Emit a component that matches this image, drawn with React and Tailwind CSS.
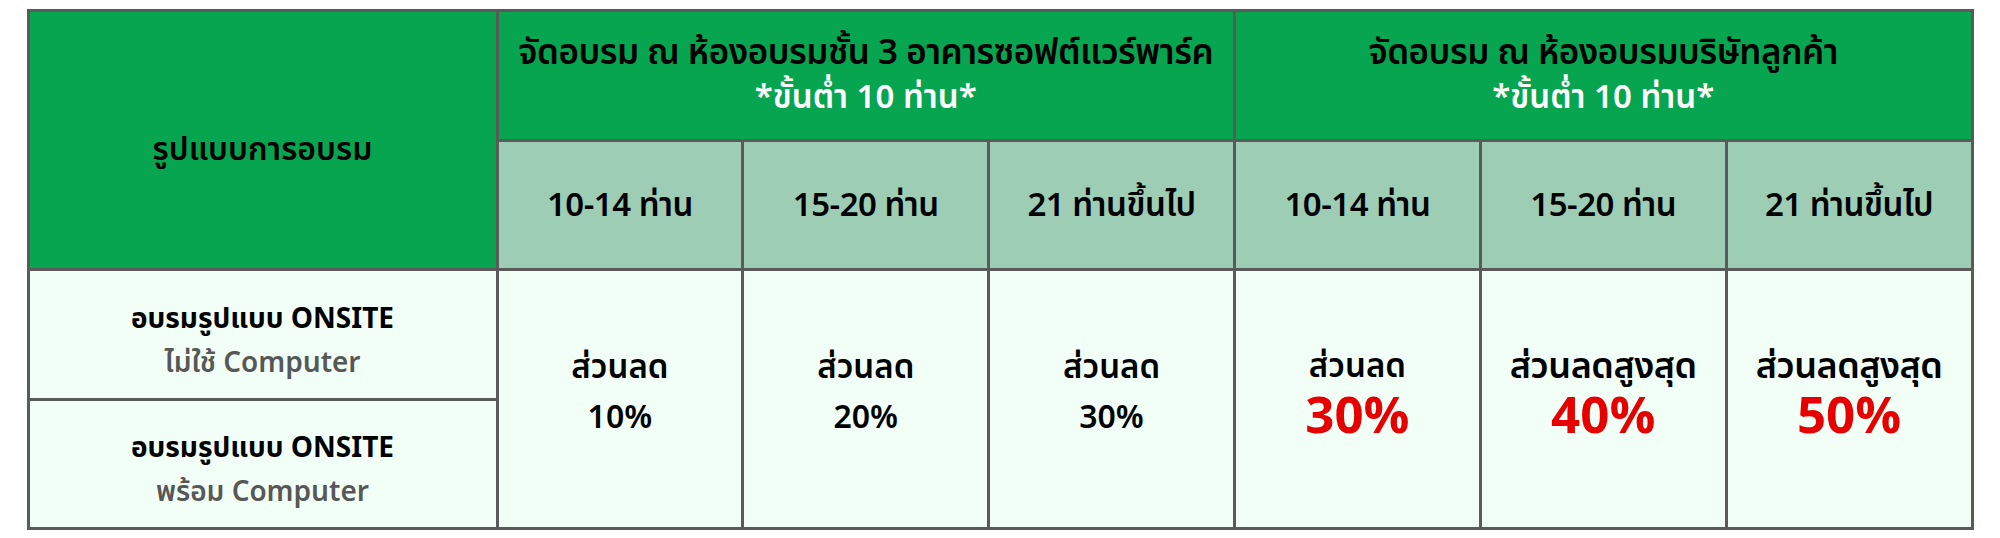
import React from "react";

const font = { fontFamily: '"Noto Sans Thai", "Noto Sans", "Liberation Sans", sans-serif' };

const groups = [
  { title: "จัดอบรม ณ ห้องอบรมชั้น 3 อาคารซอฟต์แวร์พาร์ค" },
  { title: "จัดอบรม ณ ห้องอบรมบริษัทลูกค้า" },
];

const tiers = ["10-14 ท่าน", "15-20 ท่าน", "21 ท่านขึ้นไป"];

const discounts = [
  { label: "ส่วนลด", value: "10%", red: false },
  { label: "ส่วนลด", value: "20%", red: false },
  { label: "ส่วนลด", value: "30%", red: false },
  { label: "ส่วนลด", value: "30%", red: true },
  { label: "ส่วนลดสูงสุด", value: "40%", red: true },
  { label: "ส่วนลดสูงสุด", value: "50%", red: true },
];

export default function App() {
  const cell = "border-[3px] border-[#5a5a5a] text-center align-middle";
  return (
    <div className="w-full bg-white pt-[9px] pb-[10px]" style={font}>
      <table className="mx-auto w-[1947px] table-fixed border-collapse">
        <colgroup>
          <col className="w-[469px]" />
          <col />
          <col />
          <col />
          <col />
          <col />
          <col />
        </colgroup>
        <thead>
          <tr className="h-[130px]">
            <th
              rowSpan={2}
              className={`${cell} bg-[#07a550] pt-[20px] text-[32px] font-semibold text-black`}
            >
              รูปแบบการอบรม
            </th>
            {groups.map((g) => (
              <th
                key={g.title}
                colSpan={3}
                className={`${cell} bg-[#07a550] font-semibold leading-[44px] text-white`}
              >
                <div className="whitespace-nowrap text-[35px] tracking-[-0.5px] text-black">{g.title}</div>
                <div className="text-[33px]">*ขั้นต่ำ 10 ท่าน*</div>
              </th>
            ))}
          </tr>
          <tr className="h-[129px]">
            {[...tiers, ...tiers].map((t, i) => (
              <th
                key={i}
                className={`${cell} bg-[#9ecdb5] pt-[4px] text-[33px] font-semibold tracking-[-0.5px] text-black`}
              >
                {t}
              </th>
            ))}
          </tr>
        </thead>
        <tbody>
          <tr className="h-[130px]">
            <td className={`${cell} bg-[#f1fff6] pt-[14px] text-[28px] font-bold leading-[44px]`}>
              <div className="text-black">อบรมรูปแบบ ONSITE</div>
              <div className="font-semibold text-[#575757]">ไม่ใช้ Computer</div>
            </td>
            {discounts.map((d, i) => (
              <td
                key={i}
                rowSpan={2}
                className={`${cell} bg-[#f1fff6] pb-[12px] font-semibold text-black`}
              >
                <div className={`${d.label === "ส่วนลด" ? "text-[33px]" : "text-[36px] tracking-[-0.5px]"} leading-[50px]`}>
                  {d.label}
                </div>
                {d.red ? (
                  <div className="text-[51px] font-bold leading-[52px] text-[#e60000]">
                    {d.value}
                  </div>
                ) : (
                  <div className="text-[32px] leading-[50px]">{d.value}</div>
                )}
              </td>
            ))}
          </tr>
          <tr className="h-[129px]">
            <td className={`${cell} bg-[#f1fff6] pt-[14px] text-[28px] font-bold leading-[44px]`}>
              <div className="text-black">อบรมรูปแบบ ONSITE</div>
              <div className="font-semibold text-[#575757]">พร้อม Computer</div>
            </td>
          </tr>
        </tbody>
      </table>
    </div>
  );
}
